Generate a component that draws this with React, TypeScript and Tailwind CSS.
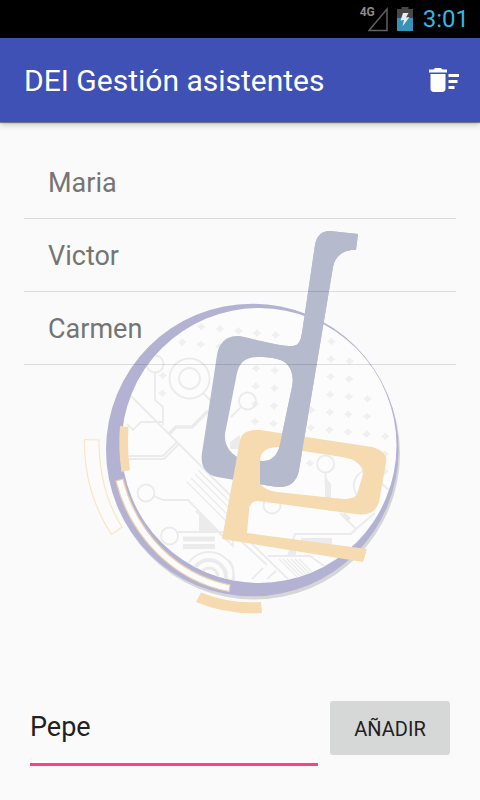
import { useState } from "react";
import type { FormEvent } from "react";
import { MdDeleteSweep } from "react-icons/md";

// [column, first row, last row] of the dotted pattern behind the letters
const DOT_COLUMNS: [number, number, number][] = [
  [-5, 3, 4],
  [-4, 1, 1],
  [-3, 0, 1],
  [-2, 0, 1],
  [-1, 0, 0],
  [0, 0, 5],
  [1, 0, 5],
  [3, 4, 7],
  [4, 0, 6],
  [5, 1, 6],
  [6, 3, 6],
  [7, 5, 7],
];

const DOTS = DOT_COLUMNS.flatMap(([col, from, to]) =>
  Array.from({ length: to - from + 1 }, (_, n) => {
    const row = from + n;
    return { x: 257 + col * 18.6 - row * 0.4, y: 333 + col * 2.1 + row * 17.7 };
  }),
);

const D_SHAPE =
  "M358 234 L356 250 C344 249 335 256 333 267 L299 470 C297 482 289 488 277 487 L217 477 C206 475 200 466 202 453 L217 355 C219 342 227 335 240 336 C256 339 276 346 293 346 Q300 346 302 333 L315 245 C317 236 321 231 330 231 Z M237 373 L225 434 C224 446 231 455 243 460 L263 461 C272 461 278 455 280 444 L292 387 C295 373 289 361 277 359 C270 357 263 357 257 357 C245 358 240 362 237 373 Z";

const E_SHAPE =
  "M222 539 L240 440 C242 433 247 430 260 430 L372 447 C382 450 388 455 386 463 L379 502 C376 511 370 516 355 514 L258 501 Q249 501 249 511 L247 533 L367 549 L363 562 Z M260 461 L260 484 C265 489 270 491 277 492 L343 499 C353 499 357 497 358 491 L363 474 C363 464 354 459 342 457 L303 451 L279 447 C268 447 260 451 260 461 Z";

function DeiLogo() {
  return (
    <svg viewBox="78 226 324 392" className="w-[324px]" aria-hidden="true">
      <defs>
        <clipPath id="disc">
          <circle cx="259" cy="445.5" r="137.5" />
        </clipPath>
        <clipPath id="stem">
          <rect x="260" y="226" width="142" height="280" />
        </clipPath>
      </defs>

      <circle cx="254" cy="453.5" r="146" fill="#d6d6d8" />
      <circle cx="252.3" cy="450" r="146.3" fill="#b3b2d3" />
      <circle cx="259" cy="445.5" r="137.5" fill="#fcfcfc" />

      <g clipPath="url(#disc)" fill="none" stroke="#ebebec" strokeWidth="1.8">
        {DOTS.map((d) => (
          <path
            key={`${d.x}-${d.y}`}
            d={`M${d.x} ${d.y - 4} l1.8 2.2 2.7 1.8 -2.7 1.8 -1.8 2.2 -1.8 -2.2 -2.7 -1.8 2.7 -1.8z`}
            fill="#f0f0f1"
            stroke="none"
          />
        ))}
        {/* upper left traces */}
        <circle cx="189.500" cy="378.500" r="20" />
        <circle cx="189.500" cy="378.500" r="10.500" />
        <circle cx="155" cy="364" r="8.500" />
        <circle cx="247.500" cy="401" r="8.500" />
        <path d="M155 373 V400 L163 407 V425 M203 393 L217 407 M241 407 L231 417 M131 396 L233 498" />
        <path d="M127 424 L133 430 L141 422 H163 M129 456 H163 L177 442 M129 459 H164 L179 444" />
        <path d="M169 434 L176 427 H192 L208 411" strokeWidth="3.500" />
        <path d="M233 498 V546 L196 511" />
        {/* lower left traces */}
        <circle cx="146" cy="493" r="8.500" />
        <circle cx="169.500" cy="536" r="8.500" />
        <path d="M154 496 L163 500 H188 L223 536 M178 532 H224" />
        <path d="M187 482 L226 521 M191 478 L227 514 M195 474 L229 508 M198 470 L231 503" strokeWidth="1.400" />
        <path d="M199 511 L220 532 H199 Z" fill="#ebebec" stroke="none" />
        <path d="M183 539 H215 M183 546.500 H215" strokeWidth="5" />
        <circle cx="209" cy="577" r="25" />
        <circle cx="209" cy="577" r="17" strokeWidth="4" />
        <circle cx="209" cy="577" r="9" strokeWidth="3" />
        {/* lower right traces */}
        <circle cx="325.500" cy="464" r="8.500" />
        <circle cx="272" cy="505" r="8.500" />
        <path d="M325.500 473 V484" />
        <path d="M325 476 L331 484 V498 H325 Z" fill="#ebebec" stroke="none" />
        <path d="M358 497 C350 486 354 475 365 470 M378 480 L394 495 M340 513 L356 529 L375 513" />
        <path d="M343 514 L349 520" strokeWidth="5" />
        <path d="M356 529 L351 534 H295 L288 556 H268 M246 538 L291 582 M241 541 L267 565 M288 556 H310 L337 575" />
        <path d="M301 541 H332 M289 552 H296" strokeWidth="6" />
        <path d="M279 559 L302 582 M283 559 L306 582 M287 559 L310 582 M291 559 L314 582 M295 559 L318 582 M299 559 L322 582" strokeWidth="1.200" />
        <path d="M229 560 Q236 568 232 580 M252 579 L263 568 M267 579 L276 571" />
        <path d="M230 449 V442 L240 435 V449 Z" fill="#ebebec" stroke="none" />
      </g>

      <path d="M120 426 L128.500 427 Q127 449 130 470 L121.500 472 Q118 448 120 426 Z" fill="#f6dab0" />
      <path
        d="M116 481 L123 479 C137 534 177 574 230 585 L229 591.500 C174 581 130 537 116 481 Z"
        fill="#fcfcfc"
        stroke="#eecfae"
        strokeWidth="1.200"
      />
      <path d="M84.500 439.500 L99 440 C99 472 106 502 122 527 L111.500 534.500 C93 506 84 473 84.500 439.500 Z" fill="#fcfbf9" stroke="#f9e5ca" strokeWidth="1.200" />
      <path d="M201 592.500 Q229 604 261 602 L262 613 Q227 615 196 602 Z" fill="#f6dab0" />

      <path d={D_SHAPE} fill="#b6bacd" fillRule="evenodd" />
      <path d={E_SHAPE} fill="#f6dab0" fillRule="evenodd" />
      <path d={D_SHAPE} fill="#b6bacd" fillRule="evenodd" clipPath="url(#stem)" />
    </svg>
  );
}

function StatusBar() {
  return (
    <div className="flex h-[38px] shrink-0 items-center justify-end bg-black pr-[11px] text-[#33b5e5]">
      <div className="relative mr-[9px] flex pl-2">
        <span className="absolute top-0 left-0 text-xs leading-none font-bold text-[#8c8c8c]">4G</span>
        <svg width="20" height="26" viewBox="8 0 20 26" aria-hidden="true">
          <path d="M9 24.500 H27 V3 Z" fill="none" stroke="#606060" strokeWidth="1.500" />
        </svg>
      </div>
      <svg width="16" height="24" viewBox="0 0 16 24" className="mr-2.5" aria-hidden="true">
        <path d="M4.500 0 h7 v2 H16 v9 H0 V2 h4.500z" fill="#484848" />
        <path d="M0 11 H16 V24 H0z" fill="#3593ba" />
        <path d="M6 6 H11.500 L9 10.500 L12.500 10 L5.500 19.500 L7 13 L3.500 13.500z" fill="#e6eef2" />
      </svg>
      <span className="text-2xl">3:01</span>
    </div>
  );
}

export default function App() {
  const [people, setPeople] = useState(["Maria", "Victor", "Carmen"]);
  const [name, setName] = useState("Pepe");

  const add = (event: FormEvent) => {
    event.preventDefault();
    if (!name.trim()) return;
    setPeople([...people, name.trim()]);
    setName("");
  };

  return (
    <div className="flex min-h-screen flex-col bg-[#fafafa] font-['Roboto',sans-serif]">
      <StatusBar />
      <header className="z-10 flex h-[84px] shrink-0 items-center justify-between bg-[#3f51b5] pr-[18px] pl-6 text-white shadow-[0_1px_1px_rgba(0,0,0,0.45),0_3px_6px_rgba(0,0,0,0.2)]">
        <h1 className="text-[30px]">DEI Gestión asistentes</h1>
        <button type="button" aria-label="Borrar lista" onClick={() => setPeople([])}>
          <MdDeleteSweep size={36} />
        </button>
      </header>

      <main className="flex flex-1 flex-col pt-6">
        <div className="relative flex-1 px-6">
          <div className="absolute inset-0 flex items-center justify-center">
            <DeiLogo />
          </div>
          <ul className="relative">
            {people.map((person, index) => (
              <li
                key={index}
                className="flex h-[73px] items-center border-b border-black/12 px-6 pt-0.5 text-[27px] text-[#757575]"
              >
                {person}
              </li>
            ))}
          </ul>
        </div>

        <form onSubmit={add} className="flex items-start gap-3 px-[30px] pt-[3px] pb-[34px]">
          <input
            type="text"
            aria-label="Nombre"
            value={name}
            onChange={(event) => setName(event.target.value)}
            className="min-w-0 flex-1 border-b-3 border-[#ff4081] pt-[10px] pb-5 text-[27px] leading-8 text-[#212121] outline-none"
          />
          <button type="submit" className="h-[54px] w-[120px] rounded-[3px] bg-[#d6d7d7] pt-0.5 text-xl text-[#212121]">
            AÑADIR
          </button>
        </form>
      </main>
    </div>
  );
}
